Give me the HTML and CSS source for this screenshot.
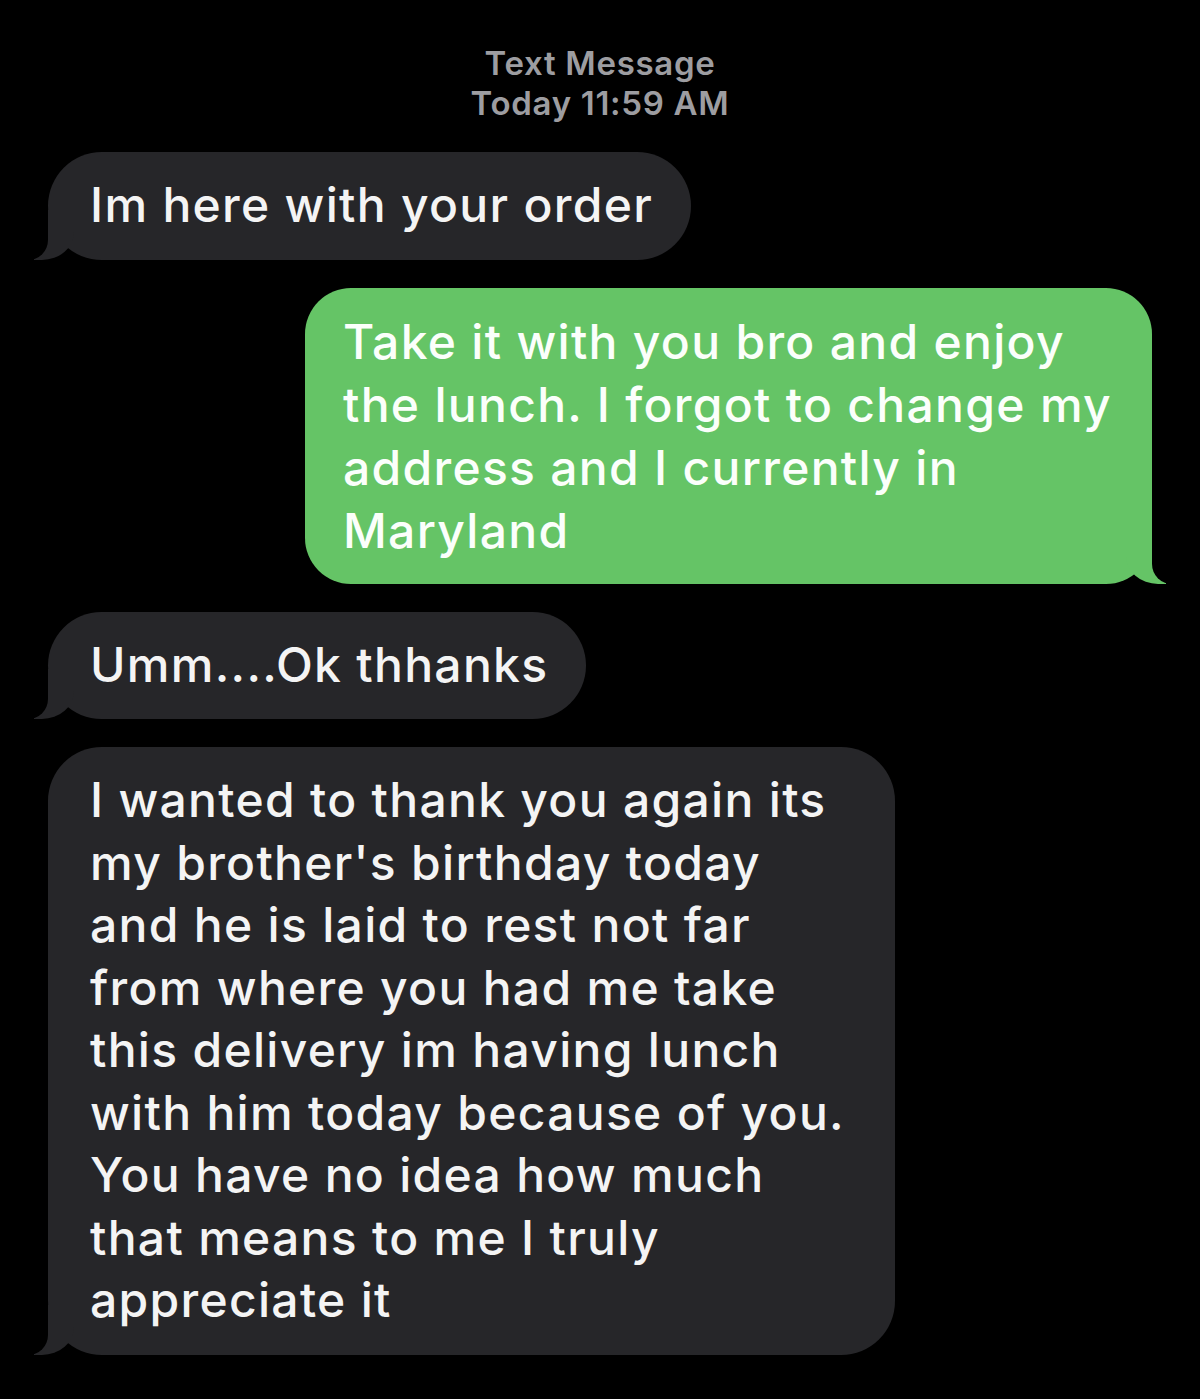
FILE: index.html
```html
<!DOCTYPE html>
<html lang="en">
<head>
<meta charset="utf-8">
<title>Text Message</title>
<link rel="stylesheet" href="styles.css">
</head>
<body>
<main class="thread">
  <header class="stamp">
    <div class="stamp-service">Text Message</div>
    <div class="stamp-time">Today 11:59 AM</div>
  </header>
  <div class="bubble them">Im here with your order</div>
  <div class="bubble me">Take it with you bro and enjoy<br>the lunch. I forgot to change my<br>address and I currently in<br>Maryland</div>
  <div class="bubble them">Umm....Ok thhanks</div>
  <div class="bubble them wide">I wanted to thank you again its<br>my brother's birthday today<br>and he is laid to rest not far<br>from where you had me take<br>this delivery im having lunch<br>with him today because of you.<br>You have no idea how much<br>that means to me I truly<br>appreciate it</div>
</main>
</body>
</html>
```
FILE: styles.css
```css
html, body {
  margin: 0;
  padding: 0;
  background: #000;
}
body {
  font-family: Inter, "Liberation Sans", Arial, sans-serif;
  color: #fff;
}
.thread {
  display: flex;
  flex-direction: column;
  align-items: flex-start;
  padding: 43px 48px 40px 48px;
  min-height: 1399px;
  box-sizing: border-box;
}
.stamp {
  align-self: center;
  text-align: center;
  color: #9d9da1;
  font-weight: 600;
  font-size: 33px;
  letter-spacing: 0.7px;
  line-height: 40px;
  margin-bottom: 29px;
}
.bubble {
  position: relative;
  font-size: 48px;
  font-weight: 500;
  letter-spacing: 1.3px;
  line-height: 62.5px;
  padding: 22px 38px 23px 42px;
  border-radius: 54px;
  margin-bottom: 28px;
}
.them {
  background: #262629;
  color: #f4f4f4;
}
.wide {
  padding-right: 50px;
}
.me {
  align-self: flex-end;
  background: #65c466;
  color: #fbfffb;
  border-radius: 46px;
  padding: 22px 40px 22px 38px;
  line-height: 63px;
}
.them::before,
.them::after,
.me::before,
.me::after {
  content: "";
  position: absolute;
  bottom: 0;
  height: 50px;
}
.them::before {
  left: -14px;
  width: 40px;
  background: #262629;
  border-bottom-right-radius: 32px 28px;
}
.them::after {
  left: -52px;
  width: 52px;
  background: #000;
  border-bottom-right-radius: 20px;
}
.me::before {
  right: -14px;
  width: 40px;
  background: #65c466;
  border-bottom-left-radius: 32px 28px;
}
.me::after {
  right: -52px;
  width: 52px;
  background: #000;
  border-bottom-left-radius: 20px;
}
```
